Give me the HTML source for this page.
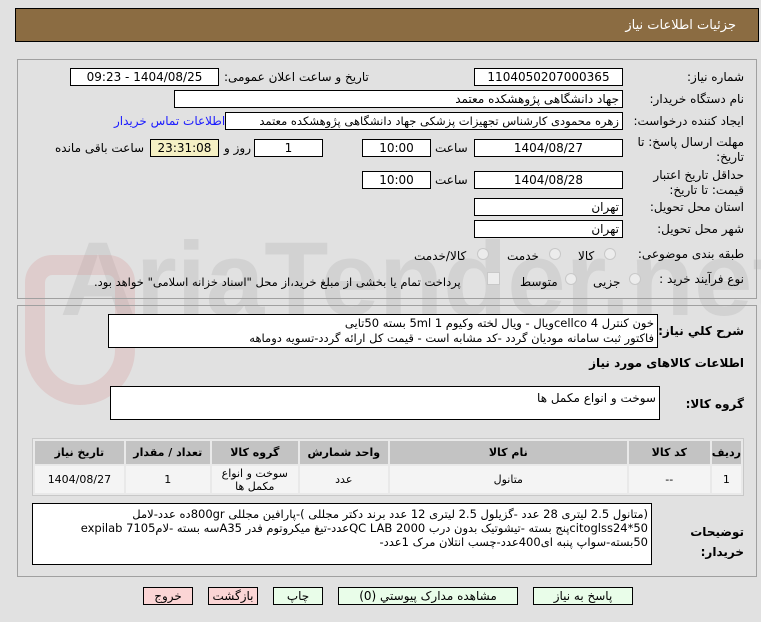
<!DOCTYPE html>
<html><head><meta charset="utf-8"><style>
body{margin:0;width:761px;height:622px;background:#e1e1e1;font-family:"DejaVu Sans","Liberation Sans",sans-serif;font-size:12px;color:#000;position:relative;overflow:hidden;direction:rtl}
.a{position:absolute;white-space:nowrap}
.hdr{left:15px;top:8px;width:744px;height:34px;background:#8b6c42;border:1px solid #000;box-sizing:border-box}
.hdr span{position:absolute;right:22px;top:9px;color:#fff;font-size:13px}
.pan{position:absolute;border:1px solid #a0a0a0;box-sizing:border-box}
.box{position:absolute;background:#fff;border:1px solid #000;box-sizing:border-box;height:18px;line-height:16px;padding:0 3px;font-size:12px;white-space:nowrap;overflow:hidden}
.c{text-align:center}
.lb{position:absolute;font-size:12px;white-space:nowrap}
.rad{position:absolute;width:12px;height:12px;border-radius:50%;border:1px solid #c8c8c8;background:#ececec;box-sizing:border-box}
.btn{position:absolute;top:587px;height:18px;border:1px solid #000;box-sizing:border-box;text-align:center;line-height:16px;font-size:12px}
table{position:absolute;left:32px;top:438px;width:712px;border-collapse:separate;border-spacing:2px;background:#e9e9e9;border:1px solid #c8c8c8;font-size:11px}
th{background:#c3c3c3;height:23px;font-weight:bold;padding:0}
td{background:#f4f4f4;height:27px;text-align:center;padding:0}
</style></head><body>
<div class="a hdr"><span>جزئیات اطلاعات نیاز</span></div>
<div class="a" style="left:60px;top:225px;font-size:105px;font-weight:bold;color:rgba(160,160,160,.22);direction:ltr;line-height:110px;font-family:'Liberation Sans',sans-serif">AriaTender.net</div>
<div class="a" style="left:25px;top:255px;width:110px;height:150px;border:20px solid rgba(215,130,130,.22);border-radius:30px 30px 60px 60px;box-sizing:border-box"></div>
<div class="pan" style="left:17px;top:59px;width:740px;height:240px"></div>
<div class="pan" style="left:17px;top:305px;width:740px;height:272px"></div>

<div class="lb" style="right:17px;top:70px">شماره نیاز:</div>
<div class="box c" style="left:474px;top:68px;width:149px">1104050207000365</div>
<div class="lb" style="left:224px;top:70px">تاریخ و ساعت اعلان عمومی:</div>
<div class="box c" style="left:70px;top:68px;width:149px">1404/08/25 - 09:23</div>

<div class="lb" style="right:17px;top:92px">نام دستگاه خریدار:</div>
<div class="box" style="left:174px;top:90px;width:449px">جهاد دانشگاهی پژوهشکده معتمد</div>

<div class="lb" style="right:17px;top:114px">ایجاد کننده درخواست:</div>
<div class="box" style="left:225px;top:112px;width:398px;font-size:11.5px">زهره محمودی کارشناس تجهیزات پزشکی جهاد دانشگاهی پژوهشکده معتمد</div>
<div class="lb" style="left:114px;top:114px;color:#1a1aff">اطلاعات تماس خریدار</div>

<div class="lb" style="right:17px;top:135px;line-height:15px;text-align:right">مهلت ارسال پاسخ: تا<br>تاریخ:</div>
<div class="box c" style="left:474px;top:139px;width:149px">1404/08/27</div>
<div class="lb" style="left:435px;top:141px">ساعت</div>
<div class="box c" style="left:362px;top:139px;width:69px">10:00</div>
<div class="box c" style="left:254px;top:139px;width:69px">1</div>
<div class="lb" style="left:224px;top:141px">روز و</div>
<div class="box c" style="left:150px;top:139px;width:69px;background:#f5f0c4">23:31:08</div>
<div class="lb" style="left:55px;top:141px">ساعت باقی مانده</div>

<div class="lb" style="right:17px;top:168px;line-height:15px;text-align:right">حداقل تاریخ اعتبار<br>قیمت: تا تاریخ:</div>
<div class="box c" style="left:474px;top:171px;width:149px">1404/08/28</div>
<div class="lb" style="left:435px;top:173px">ساعت</div>
<div class="box c" style="left:362px;top:171px;width:69px">10:00</div>

<div class="lb" style="right:17px;top:200px">استان محل تحویل:</div>
<div class="box" style="left:474px;top:198px;width:149px">تهران</div>
<div class="lb" style="right:17px;top:222px">شهر محل تحویل:</div>
<div class="box" style="left:474px;top:220px;width:149px">تهران</div>

<div class="lb" style="right:17px;top:247px">طبقه بندی موضوعی:</div>
<div class="rad" style="left:604px;top:248px"></div><div class="lb" style="left:578px;top:249px">کالا</div>
<div class="rad" style="left:549px;top:248px"></div><div class="lb" style="left:507px;top:249px">خدمت</div>
<div class="rad" style="left:477px;top:248px"></div><div class="lb" style="left:414px;top:249px">کالا/خدمت</div>

<div class="lb" style="right:17px;top:272px">نوع فرآیند خرید :</div>
<div class="rad" style="left:629px;top:273px"></div><div class="lb" style="left:593px;top:275px">جزیی</div>
<div class="rad" style="left:565px;top:273px"></div><div class="lb" style="left:520px;top:275px">متوسط</div>
<div class="a" style="left:487px;top:272px;width:11px;height:11px;border:1px solid #c8c8c8;background:#ececec"></div>
<div class="lb" style="left:94px;top:275px;font-size:11.5px">پرداخت تمام یا بخشی از مبلغ خرید،از محل "اسناد خزانه اسلامی" خواهد بود.</div>

<div class="lb" style="right:17px;top:324px;font-weight:bold">شرح کلي نياز:</div>
<div class="box" style="left:108px;top:314px;width:550px;height:34px;line-height:15px;padding-top:1px;font-size:11.5px">خون کنترل cellco 4ویال - ویال لخته وکیوم 5ml 1 بسته 50تایی<br>فاکتور ثبت سامانه مودیان گردد -کد مشابه است - قیمت کل ارائه گردد-تسویه دوماهه</div>
<div class="lb" style="right:17px;top:356px;font-weight:bold">اطلاعات کالاهای مورد نیاز</div>
<div class="lb" style="right:17px;top:397px;font-weight:bold">گروه کالا:</div>
<div class="box" style="left:110px;top:386px;width:550px;height:34px;padding-top:3px">سوخت و انواع مکمل ها</div>

<table><tr><th style="width:26px">ردیف</th><th style="width:81px">کد کالا</th><th style="width:237px">نام کالا</th><th style="width:88px">واحد شمارش</th><th style="width:86px">گروه کالا</th><th style="width:84px">تعداد / مقدار</th><th>تاریخ نیاز</th></tr>
<tr><td>1</td><td>--</td><td>متانول</td><td>عدد</td><td style="line-height:13px">سوخت و انواع<br>مکمل ها</td><td>1</td><td>1404/08/27</td></tr></table>

<div class="lb" style="right:17px;top:522px;font-weight:bold;line-height:20px;text-align:right">توضیحات<br>خریدار:</div>
<div class="box" style="left:32px;top:503px;width:620px;height:62px;line-height:14px;padding-top:3px;white-space:normal;font-size:11.5px">(متانول 2.5 لیتری 28 عدد -گزیلول 2.5 لیتری 12 عدد  برند دکتر مجللی )-پارافین مجللی 800grده عدد-لامل 50*citoglss24پنج بسته -تیشوتیک بدون درب QC LAB 2000عدد-تیغ میکروتوم فدر A35سه بسته -لام7105 expilab 50بسته-سواپ پنبه ای400عدد-چسب انتلان مرک 1عدد-</div>

<div class="btn" style="left:143px;width:50px;background:#fbd5d5">خروج</div>
<div class="btn" style="left:208px;width:50px;background:#fbd5d5">بازگشت</div>
<div class="btn" style="left:273px;width:50px;background:#e9fde9">چاپ</div>
<div class="btn" style="left:338px;width:180px;background:#e9fde9">مشاهده مدارک پیوستي (0)</div>
<div class="btn" style="left:533px;width:100px;background:#e9fde9">پاسخ به نیاز</div>
</body></html>
